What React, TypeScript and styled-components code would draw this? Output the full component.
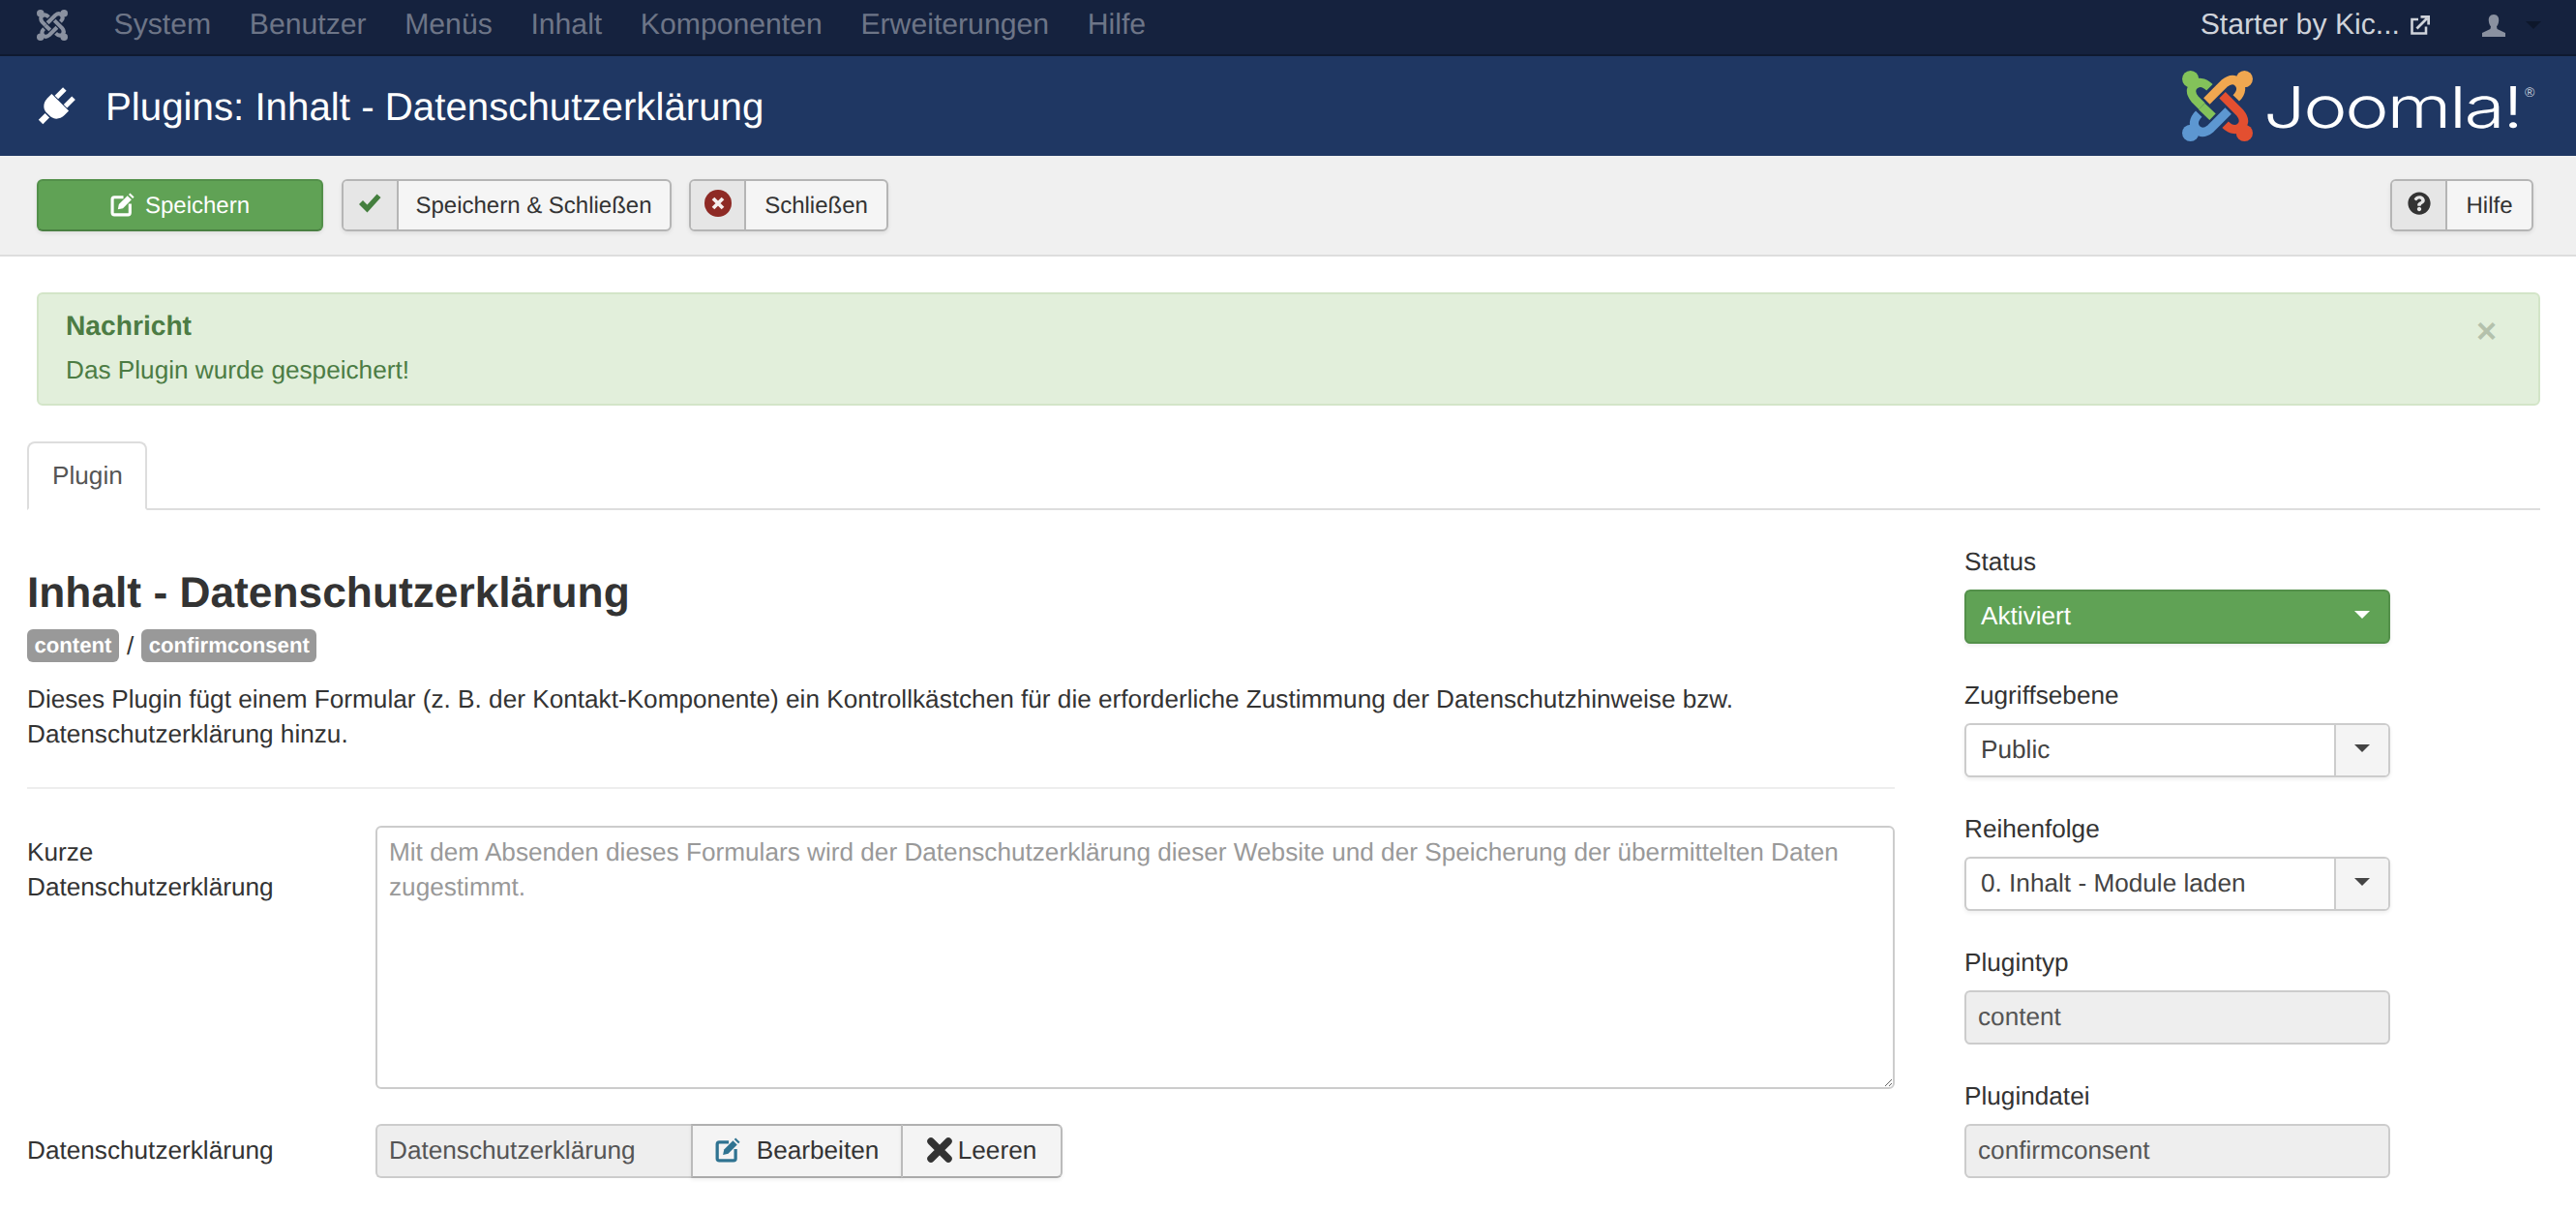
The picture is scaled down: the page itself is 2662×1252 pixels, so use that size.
import React from "react";
import styled, { createGlobalStyle } from "styled-components";
import { FaQuestionCircle } from "react-icons/fa";

const Global = createGlobalStyle`
  html, body { margin: 0; padding: 0; height: 100%; overflow: hidden; background: #fff; }
  body {
    font-family: "Liberation Sans", Arial, sans-serif; font-size: 26.18px; line-height: 36px; color: #333;
    text-rendering: geometricPrecision;
  }
  * { box-sizing: border-box; }
  button, textarea { text-rendering: geometricPrecision; }
`;

const Page = styled.div`display: flex; flex-direction: column; width: 2662px; height: 1252px; overflow: hidden;`;

const Navbar = styled.nav`
  height: 58px; flex: none; display: flex; align-items: center; padding: 0 36px 4px 38px;
  background: #15223e; border-bottom: 2px solid #0f1a30;
`;
const NavList = styled.div`display: flex; gap: 39.6px; margin-left: 47.5px; flex: 1;`;
const NavItem = styled.span`font-size: 30.2px; line-height: 36px; color: #6d7587;`;
const SiteLink = styled.span`display: flex; align-items: center; gap: 11px; font-size: 30.2px; color: #cfd3da;`;
const UserMenu = styled.span`display: flex; align-items: center; gap: 21px; margin-left: 54px;`;
const Caret = styled.span<{ $color?: string }>`
  width: 0; height: 0; border-style: solid; border-width: 8px 8px 0 8px;
  border-color: ${(p) => p.$color || "#0d172b"} transparent transparent transparent;
`;

const Header = styled.header`
  height: 103px; flex: none; display: flex; align-items: center; padding: 0 35px 0 38px; background: #1f3763; color: #fff;
`;
const Title = styled.h1`margin: 2px 0 0 31px; flex: 1; font-size: 40.27px; font-weight: 400; line-height: 48px;`;
const LogoWrap = styled.div`display: flex; align-items: center; gap: 11px;`;

const Toolbar = styled.div`
  height: 104px; flex: none; display: flex; align-items: center; gap: 18.5px; padding: 0 44px 0 38px;
  background: #f0f0f0; border-bottom: 2px solid #ddd;
`;
const Spacer = styled.div`flex: 1;`;
const SaveButton = styled.button`
  width: 296px; height: 54px; display: flex; align-items: center; justify-content: center; gap: 11px; padding: 2px 0 0;
  background: #60a255; color: #fff; font: 24px/36px "Liberation Sans", Arial, sans-serif;
  border: 2px solid #53904a; border-bottom-color: #4a8042; border-radius: 6px; box-shadow: 0 2px 4px rgba(0,0,0,.08);
  & > svg { margin-top: -4px; }
`;
const ToolButton = styled.button`
  height: 54px; display: flex; align-items: stretch; padding: 0; background: #f5f5f5; color: #333;
  font: 24px/36px "Liberation Sans", Arial, sans-serif;
  border: 2px solid #b5b5b5; border-radius: 6px; box-shadow: 0 2px 4px rgba(0,0,0,.08); overflow: hidden;
`;
const ToolIcon = styled.span`
  width: 57px; flex: none; display: flex; align-items: center; justify-content: center; padding-bottom: 5px;
  background: #e6e6e6; border-right: 2px solid #b5b5b5;
`;
const ToolLabel = styled.span<{ $w: number }>`
  width: ${(p) => p.$w}px; display: flex; align-items: center; justify-content: center; padding-top: 2px;
`;

const Main = styled.main`flex: 1; display: flex; flex-direction: column; padding: 37px 37px 0 28px;`;
const Alert = styled.div`
  position: relative; height: 117px; margin-left: 10px; padding: 14px 28px; background: #e2efdb;
  border: 2px solid #d3e5c8; border-radius: 6px; color: #4c7c44;
`;
const AlertTitle = styled.div`font-weight: 700; font-size: 28.2px; margin-bottom: 10px;`;
const AlertClose = styled.span`
  position: absolute; right: 43px; top: 20px; font: 700 36px/36px "Liberation Sans", Arial, sans-serif; color: #b4c1ac;
`;
const Tabs = styled.div`display: flex; margin-top: 37px; border-bottom: 2px solid #ddd; height: 71px;`;
const Tab = styled.div`
  height: 71px; padding: 15px 23px 16px 24px; background: #fff; color: #555; border: 2px solid #ddd; border-bottom-color: #fff; border-radius: 8px 8px 0 0;
`;
const Columns = styled.div`display: grid; grid-template-columns: 1930px 440px; column-gap: 72px; align-items: start;`;
const Left = styled.section`padding-top: 64px;`;
const Heading = styled.h2`margin: 0; font-size: 44.3px; line-height: 44px; font-weight: 700; color: #333;`;
const Badges = styled.div`display: flex; align-items: center; gap: 8px; margin-top: 15px; height: 34px;`;
const Badge = styled.span`
  padding: 0 7.5px; height: 34px; font-size: 22.15px; line-height: 34px; font-weight: 700; color: #fff; background: #999; border-radius: 6px;
`;
const Desc = styled.p`margin: 20px 0 0;`;
const Rule = styled.hr`margin: 37px 0 38px; border: 0; height: 2px; background: #eee;`;
const FormRow = styled.div<{ $center?: boolean }>`
  display: grid; grid-template-columns: 360px 1fr; align-items: ${(p) => (p.$center ? "center" : "start")}; margin-bottom: 36px;
`;
const RowLabel = styled.label<{ $pad?: boolean }>`
  display: block; width: 320px; padding: ${(p) => (p.$pad ? "9px 0 0" : "0 0 2px")};
`;
const TextArea = styled.textarea`
  display: block; width: 100%; height: 272px; padding: 7px 12px; border: 2px solid #ccc; border-radius: 6px; background: #fff;
  font: 26.18px/36px "Liberation Sans", Arial, sans-serif; color: #555; outline: none;
  &::placeholder { color: #999; opacity: 1; }
`;
const Group = styled.div`display: flex; height: 56px;`;
const GroupInput = styled.div`
  width: 326px; padding: 0 12px; line-height: 50px; background: #eee; color: #555; border: 2px solid #ccc; border-right: 0; border-radius: 6px 0 0 6px;
`;
const GroupButton = styled.button<{ $w: number; $end?: boolean }>`
  width: ${(p) => p.$w}px; display: flex; align-items: center; justify-content: center; gap: ${(p) => (p.$end ? 6 : 17)}px; padding: 0 0 2px;
  margin-left: ${(p) => (p.$end ? -2 : 0)}px;
  background: #f4f4f4; color: #333; font: 26.18px/36px "Liberation Sans", Arial, sans-serif;
  border: 2px solid #bbb; border-top-color: #b0b0b0; border-bottom-color: #aaa;
  border-radius: ${(p) => (p.$end ? "0 6px 6px 0" : "0")}; box-shadow: 0 2px 4px rgba(0,0,0,.06);
`;

const Side = styled.aside`padding-top: 35px; display: flex; flex-direction: column; gap: 35px;`;
const Field = styled.div`display: flex; flex-direction: column; gap: 11px;`;
const FieldLabel = styled.label`display: block;`;
const SelectBox = styled.div<{ $green?: boolean }>`
  height: 56px; display: flex; align-items: stretch; border: 2px solid ${(p) => (p.$green ? "#53904a" : "#ccc")}; border-radius: 6px;
  background: ${(p) => (p.$green ? "#60a255" : "#fff")}; color: ${(p) => (p.$green ? "#fff" : "#444")};
  box-shadow: 0 2px 4px rgba(0,0,0,.07); overflow: hidden;
`;
const SelectText = styled.span`flex: 1; padding: 0 15px; line-height: 50px;`;
const SelectArrow = styled.span<{ $green?: boolean }>`
  width: 56px; display: flex; align-items: center; justify-content: center; padding-bottom: 4px;
  background: ${(p) => (p.$green ? "transparent" : "#f4f4f4")}; border-left: 2px solid ${(p) => (p.$green ? "transparent" : "#ccc")};
`;
const ReadOnly = styled.div`
  height: 56px; padding: 0 12px; line-height: 50px; background: #eee; color: #555; border: 2px solid #ccc; border-radius: 6px;
`;

const knotArm = "M28 17 C22 11 16 11 12 15 C8 19 9 24 13 29 L31 47";
const knotTip = "M20 36.5 L31 47";

function Knot({ size, gap, colors }: { size: number; gap: string; colors: string[] }) {
  return (
    <svg width={size} height={size} viewBox="0 0 72 72" aria-hidden="true">
      {colors.map((c, i) => (
        <g key={i} transform={`rotate(${i * 90} 36 36)`}>
          <path d={knotArm} fill="none" stroke={gap} strokeWidth="12" />
          <path d={knotArm} fill="none" stroke={c} strokeWidth="9" />
          <circle cx="8.5" cy="8.5" r="8.5" fill={c} />
        </g>
      ))}
      <path d={knotTip} fill="none" stroke={gap} strokeWidth="12" />
      <path d={knotTip} fill="none" stroke={colors[0]} strokeWidth="9" />
    </svg>
  );
}

const PlugIcon = () => (
  <svg width="40" height="40" viewBox="-20 -20 40 40" aria-hidden="true">
    <g transform="rotate(45) translate(0 -1)" fill="#fff">
      <rect x="-9" y="-18" width="5" height="12" />
      <rect x="4" y="-18" width="5" height="12" />
      <path d="M-12.5 -5 H12.5 V1 C12.5 8 8 12 3.5 12.5 H-3.5 C-8 12 -12.5 8 -12.5 1 Z" />
      <rect x="-3.2" y="14" width="6.4" height="9.5" />
    </g>
  </svg>
);

const EditIcon = ({ color, size = 24 }: { color: string; size?: number }) => (
  <svg width={size} height={size} viewBox="0 0 24 24" aria-hidden="true">
    <path
      d="M13 4.5 H4 a2 2 0 0 0 -2 2 V20 a2 2 0 0 0 2 2 H17.5 a2 2 0 0 0 2 -2 V11"
      fill="none"
      stroke={color}
      strokeWidth="3"
    />
    <path d="M7.5 16.5 L8.5 11.5 L17 3 L21 7 L12.5 15.5 Z" fill={color} />
    <path d="M18.2 1.8 L19.6 0.4 L23.6 4.4 L22.2 5.8 Z" fill={color} />
  </svg>
);

const CheckIcon = () => (
  <svg width="24" height="20" viewBox="0 0 24 20" aria-hidden="true">
    <path d="M1 11 L5 7 L9.5 11.5 L19.5 0.5 L23.5 4 L9.5 19.5 Z" fill="#447f3e" />
  </svg>
);

const CancelIcon = () => (
  <svg width="28" height="28" viewBox="0 0 28 28" aria-hidden="true">
    <circle cx="14" cy="14" r="14" fill="#8e2a25" />
    <path d="M9 9 L19 19 M19 9 L9 19" stroke="#f5eeee" strokeWidth="3.8" />
  </svg>
);

const ClearIcon = () => (
  <svg width="26" height="26" viewBox="0 0 26 26" aria-hidden="true">
    <path d="M4 4 L22 22 M22 4 L4 22" stroke="#333" strokeWidth="7.5" strokeLinecap="round" />
  </svg>
);

const ExternalIcon = () => (
  <svg width="20" height="20" viewBox="0 0 20 20" aria-hidden="true">
    <path d="M8 4 H1.5 V18.5 H16 V11.5" fill="none" stroke="#cfd3da" strokeWidth="2.6" />
    <path d="M6.5 13.5 L17 3 M10.5 1.3 H18.7 V9.5" fill="none" stroke="#cfd3da" strokeWidth="2.8" />
  </svg>
);

const UserIcon = () => (
  <svg width="24" height="23" viewBox="0 0 24 23" aria-hidden="true">
    <path
      d="M12 0 C16 0 17.5 3 17.2 6.5 C17 9.5 15.8 11.5 15 12.5 L15.6 15 L24 19 V23 H0 V19 L8.4 15 L9 12.5 C8.2 11.5 7 9.5 6.8 6.5 C6.5 3 8 0 12 0 Z"
      fill="#8a91a0"
    />
  </svg>
);

const Wordmark = () => (
  <svg width="288" height="72" viewBox="0 0 288 72" aria-hidden="false">
    <g transform="scale(1.3 1)">
      <text
        x="0"
        y="58"
        fontFamily="Inter, 'Liberation Sans', sans-serif"
        fontWeight="300"
        fontSize="59"
        letterSpacing="-1.8"
        fill="#fff"
      >
        Joomla!
      </text>
    </g>
    <text x="270" y="26" fontFamily="'Liberation Sans', sans-serif" fontSize="14" fill="#c9d1de">
      ®
    </text>
  </svg>
);

const menu = ["System", "Benutzer", "Menüs", "Inhalt", "Komponenten", "Erweiterungen", "Hilfe"];
const logoColors = ["#83c25a", "#f0a750", "#e34f30", "#5d97d1"];
const greyColors = ["#8a91a0", "#8a91a0", "#8a91a0", "#8a91a0"];

export default function App() {
  return (
    <Page>
      <Global />
      <Navbar>
        <Knot size={32} gap="#15223e" colors={greyColors} />
        <NavList>
          {menu.map((m) => (
            <NavItem key={m}>{m}</NavItem>
          ))}
        </NavList>
        <SiteLink>
          Starter by Kic... <ExternalIcon />
        </SiteLink>
        <UserMenu>
          <UserIcon />
          <Caret />
        </UserMenu>
      </Navbar>

      <Header>
        <PlugIcon />
        <Title>Plugins: Inhalt - Datenschutzerklärung</Title>
        <LogoWrap>
          <Knot size={73} gap="#1f3763" colors={logoColors} />
          <Wordmark />
        </LogoWrap>
      </Header>

      <Toolbar>
        <SaveButton>
          <EditIcon color="#fff" size={25} />
          Speichern
        </SaveButton>
        <ToolButton>
          <ToolIcon>
            <CheckIcon />
          </ToolIcon>
          <ToolLabel $w={280}>Speichern &amp; Schließen</ToolLabel>
        </ToolButton>
        <ToolButton>
          <ToolIcon>
            <CancelIcon />
          </ToolIcon>
          <ToolLabel $w={145}>Schließen</ToolLabel>
        </ToolButton>
        <Spacer />
        <ToolButton>
          <ToolIcon>
            <FaQuestionCircle size={24} color="#333" />
          </ToolIcon>
          <ToolLabel $w={87}>Hilfe</ToolLabel>
        </ToolButton>
      </Toolbar>

      <Main>
        <Alert>
          <AlertTitle>Nachricht</AlertTitle>
          <div>Das Plugin wurde gespeichert!</div>
          <AlertClose>×</AlertClose>
        </Alert>
        <Tabs>
          <Tab>Plugin</Tab>
        </Tabs>
        <Columns>
          <Left>
            <Heading>Inhalt - Datenschutzerklärung</Heading>
            <Badges>
              <Badge>content</Badge>/<Badge>confirmconsent</Badge>
            </Badges>
            <Desc>
              Dieses Plugin fügt einem Formular (z. B. der Kontakt-Komponente) ein Kontrollkästchen für die erforderliche
              Zustimmung der Datenschutzhinweise bzw. Datenschutzerklärung hinzu.
            </Desc>
            <Rule />
            <FormRow>
              <RowLabel $pad>Kurze Datenschutzerklärung</RowLabel>
              <TextArea
                readOnly
                placeholder="Mit dem Absenden dieses Formulars wird der Datenschutzerklärung dieser Website und der Speicherung der übermittelten Daten zugestimmt."
              />
            </FormRow>
            <FormRow $center>
              <RowLabel>Datenschutzerklärung</RowLabel>
              <Group>
                <GroupInput>Datenschutzerklärung</GroupInput>
                <GroupButton $w={219}>
                  <EditIcon color="#2f7391" size={26} />
                  Bearbeiten
                </GroupButton>
                <GroupButton $w={167} $end>
                  <ClearIcon />
                  Leeren
                </GroupButton>
              </Group>
            </FormRow>
          </Left>
          <Side>
            <Field>
              <FieldLabel>Status</FieldLabel>
              <SelectBox $green>
                <SelectText>Aktiviert</SelectText>
                <SelectArrow $green>
                  <Caret $color="#fff" />
                </SelectArrow>
              </SelectBox>
            </Field>
            <Field>
              <FieldLabel>Zugriffsebene</FieldLabel>
              <SelectBox>
                <SelectText>Public</SelectText>
                <SelectArrow>
                  <Caret $color="#444" />
                </SelectArrow>
              </SelectBox>
            </Field>
            <Field>
              <FieldLabel>Reihenfolge</FieldLabel>
              <SelectBox>
                <SelectText>0. Inhalt - Module laden</SelectText>
                <SelectArrow>
                  <Caret $color="#444" />
                </SelectArrow>
              </SelectBox>
            </Field>
            <Field>
              <FieldLabel>Plugintyp</FieldLabel>
              <ReadOnly>content</ReadOnly>
            </Field>
            <Field>
              <FieldLabel>Plugindatei</FieldLabel>
              <ReadOnly>confirmconsent</ReadOnly>
            </Field>
          </Side>
        </Columns>
      </Main>
    </Page>
  );
}
